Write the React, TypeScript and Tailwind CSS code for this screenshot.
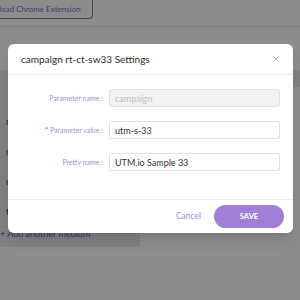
import React from "react"
import { X } from "lucide-react"

const font = { fontFamily: "Lato, 'Noto Sans', sans-serif" }

const Field = ({
  label,
  value,
  required = false,
  disabled = false,
}: {
  label: string
  value: string
  required?: boolean
  disabled?: boolean
}) => (
  <div className="flex items-center">
    <label className="w-[93px] pr-[6px] text-right text-[7px] text-[#a58bdb]">
      {required && <span className="mr-[2px] text-[#f5222d]">*</span>}
      {label} :
    </label>
    <input
      readOnly
      value={value}
      disabled={disabled}
      className={`h-[18px] w-[171px] rounded-[2px] border border-[#e1e1e1] px-[5px] text-[9px] outline-none ${
        disabled ? "bg-[#f2f2f2] text-[#c2c2c2]" : "bg-white text-[#333]"
      }`}
    />
  </div>
)

export default function App() {
  return (
    <div className="relative h-[300px] w-[300px] overflow-hidden bg-white" style={font}>
      {/* page behind the modal */}
      <div className="flex h-[27px] items-end border-b border-[#e6e6e6] pb-[7px]">
        <button className="-ml-[34px] h-[26px] whitespace-nowrap rounded-b-[4px] border border-t-0 border-[#8a6cc8] px-[11px] pt-[6px] text-[8px] text-[#8a6cc8]">
          Download Chrome Extension
        </button>
      </div>
      <div className="mt-[43px] h-[17px] bg-[#ececf2]" />
      <div className="w-[140px] bg-[#ececf2] pb-[6px] pt-[20px] text-[9px] text-[#333]">
        <div className="flex h-[30px] items-center border-b border-[#e4e4ea] pl-[6px]">name</div>
        <div className="flex h-[30px] items-center border-b border-[#e4e4ea] pl-[6px]">source</div>
        <div className="flex h-[30px] items-center border-b border-[#e4e4ea] pl-[6px]">organic</div>
        <div className="flex h-[30px] items-center border-b border-[#e4e4ea] pl-[6px]">term</div>
        <div className="flex h-[14px] items-center text-[#6a4fb0]">+ Add another medium</div>
      </div>

      {/* overlay */}
      <div className="absolute inset-0 bg-black/45">
        <div className="ml-[8px] mt-[44px] w-[285px] rounded-[6px] bg-white shadow-lg">
          <div className="flex h-[31px] items-center justify-between border-b border-[#eeeeee] pl-[13px] pr-[12px]">
            <span className="text-[10px] text-[#2b2b2b]">campaign rt-ct-sw33 Settings</span>
            <X className="h-[10px] w-[10px] text-[#999]" strokeWidth={1.6} />
          </div>
          <div className="flex flex-col gap-[14px] pb-[28px] pl-[8px] pt-[14px]">
            <Field label="Parameter name" value="campaign" disabled />
            <Field label="Parameter value" value="utm-s-33" required />
            <Field label="Pretty name" value="UTM.io Sample 33" />
          </div>
          <div className="flex h-[34px] items-center justify-end gap-[13px] border-t border-[#eeeeee] pr-[9px]">
            <button className="text-[8.5px] text-[#a58bdb]">Cancel</button>
            <button className="h-[23px] w-[70px] rounded-full bg-[#a07fd6] text-[7.5px] font-bold text-white">
              SAVE
            </button>
          </div>
        </div>
      </div>
    </div>
  )
}
